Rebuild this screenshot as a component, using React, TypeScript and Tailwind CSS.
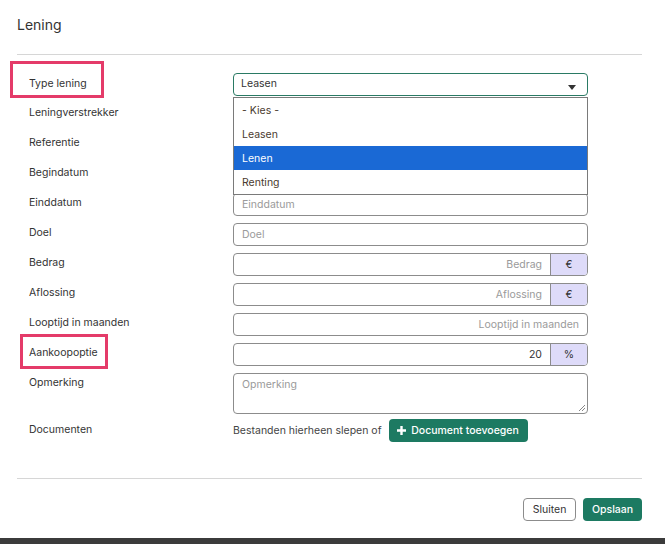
import { useState } from "react";

const font = { fontFamily: "Inter, 'Noto Sans', sans-serif" };

type Field = {
  label: string;
  placeholder?: string;
  value?: string;
  addon?: string;
  right?: boolean;
};

// the first three inputs sit under the open dropdown, so they show no text
const fields: Field[] = [
  { label: "Leningverstrekker" },
  { label: "Referentie" },
  { label: "Begindatum" },
  { label: "Einddatum", placeholder: "Einddatum" },
  { label: "Doel", placeholder: "Doel" },
  { label: "Bedrag", placeholder: "Bedrag", addon: "€", right: true },
  { label: "Aflossing", placeholder: "Aflossing", addon: "€", right: true },
  { label: "Looptijd in maanden", placeholder: "Looptijd in maanden", right: true },
  { label: "Aankoopoptie", value: "20", addon: "%", right: true },
];

const options = ["- Kies -", "Leasen", "Lenen", "Renting"];

function Cursor() {
  return (
    <svg width="14" height="21" viewBox="0 0 14 21" className="absolute left-[360px] top-[155px]">
      <path
        d="M1 1 L1 16 L4.5 12.5 L7 18.5 L9.3 17.5 L6.8 11.6 L11.5 11.6 Z"
        fill="white"
        stroke="black"
        strokeWidth="1"
        strokeLinejoin="round"
      />
    </svg>
  );
}

export default function App() {
  const [selected] = useState("Leasen");
  const [hover] = useState("Lenen");

  return (
    <div className="relative flex h-[544px] w-full flex-col bg-white text-[#333]" style={font}>
      <div className="flex-1 pl-[17px] pr-[23px]">
        <div className="box-border h-[55px] border-b border-[#d6d6d6] pt-[16px]">
          <h1 className="text-[14px] leading-[18px] text-[#333]">Lening</h1>
        </div>

        <div className="grid grid-cols-[204px_355px] gap-y-[7px] pl-[12px] pt-[18px] text-[10.5px]">
          <div className="relative pt-[3px] leading-[16px]">
            Type lening
            <div className="absolute left-[-19px] top-[-12px] h-[37px] w-[94px] border-[3px] border-[#e43b69]" />
          </div>
          <div className="relative">
            <div className="flex h-[23px] items-center justify-between rounded-[4px] border border-[#2a7a64] pl-[7px] pr-[11px]">
              <span className="-mt-[2px]">{selected}</span>
              <svg width="8" height="5" viewBox="0 0 8 5" className="mt-[6px]">
                <path d="M0 0 L8 0 L4 5 Z" fill="#333" />
              </svg>
            </div>
            <div className="absolute left-0 top-[24px] z-10 w-full border border-[#7a7a7a] bg-white">
              {options.map((o) => (
                <div
                  key={o}
                  className={
                    o === hover
                      ? "h-[24px] bg-[#1a69d5] pl-[8px] pt-[1px] leading-[24px] text-white"
                      : "h-[24px] pl-[8px] pt-[1px] leading-[24px] text-[#4a3a2e]"
                  }
                >
                  {o}
                </div>
              ))}
            </div>
          </div>

          {fields.map((f) => (
            <FieldRow key={f.label} f={f} />
          ))}

          <div className="pt-[2px] leading-[16px]">Opmerking</div>
          <div className="relative h-[41px] rounded-[4px] border border-[#8c8c8c] px-[8px] pt-[3px] text-[#9a9a9a]">
            Opmerking
            <svg width="7" height="7" viewBox="0 0 7 7" className="absolute bottom-[2px] right-[2px]">
              <path d="M1 7 L7 1 M4 7 L7 4" stroke="#888" strokeWidth="1" />
            </svg>
          </div>

          <div className="mt-[-2px] pt-[3px] leading-[16px]">Documenten</div>
          <div className="mt-[-2px] flex items-center gap-[7px]">
            <span className="text-[#444]">Bestanden hierheen slepen of</span>
            <button className="flex h-[23px] w-[139px] items-center justify-center gap-[5px] rounded-[4px] bg-[#1d7a62] text-[10.5px] font-medium text-white">
              <svg width="9" height="9" viewBox="0 0 9 9">
                <path d="M3.3 0 H5.7 V3.3 H9 V5.7 H5.7 V9 H3.3 V5.7 H0 V3.3 H3.3 Z" fill="white" />
              </svg>
              Document toevoegen
            </button>
          </div>
        </div>

        <div className="mt-[36px] border-t border-[#d6d6d6]" />

        <div className="flex justify-end gap-[7px] pt-[19px] text-[10.5px]">
          <button className="h-[23px] w-[53px] rounded-[4px] border border-[#8c8c8c] bg-white text-[#333]">
            Sluiten
          </button>
          <button className="h-[23px] w-[59px] rounded-[4px] bg-[#1d7a62] font-medium text-white">
            Opslaan
          </button>
        </div>
      </div>

      <div className="h-[6px] bg-[#3b3b3b]" />
      <Cursor />
    </div>
  );
}

function FieldRow({ f }: { f: Field }) {
  return (
    <>
      <div className="relative pt-[2px] leading-[16px]">
        {f.label}
        {f.label === "Aankoopoptie" && (
          <div className="absolute left-[-9px] top-[-9px] h-[35px] w-[88px] border-[3px] border-[#e43b69]" />
        )}
      </div>
      <div className="flex h-[23px] overflow-hidden rounded-[4px] border border-[#8c8c8c]">
        <div
          className={
            "flex flex-1 items-center px-[8px] " +
            (f.right ? "justify-end " : "") +
            (f.value ? "text-[#333]" : "text-[#9a9a9a]")
          }
        >
          {f.value ?? f.placeholder}
        </div>
        {f.addon && (
          <div className="flex w-[37px] items-start justify-center border-l border-[#8c8c8c] bg-[#dedbf9] pt-[3px] text-[10.5px] text-[#333]">
            {f.addon}
          </div>
        )}
      </div>
    </>
  );
}
